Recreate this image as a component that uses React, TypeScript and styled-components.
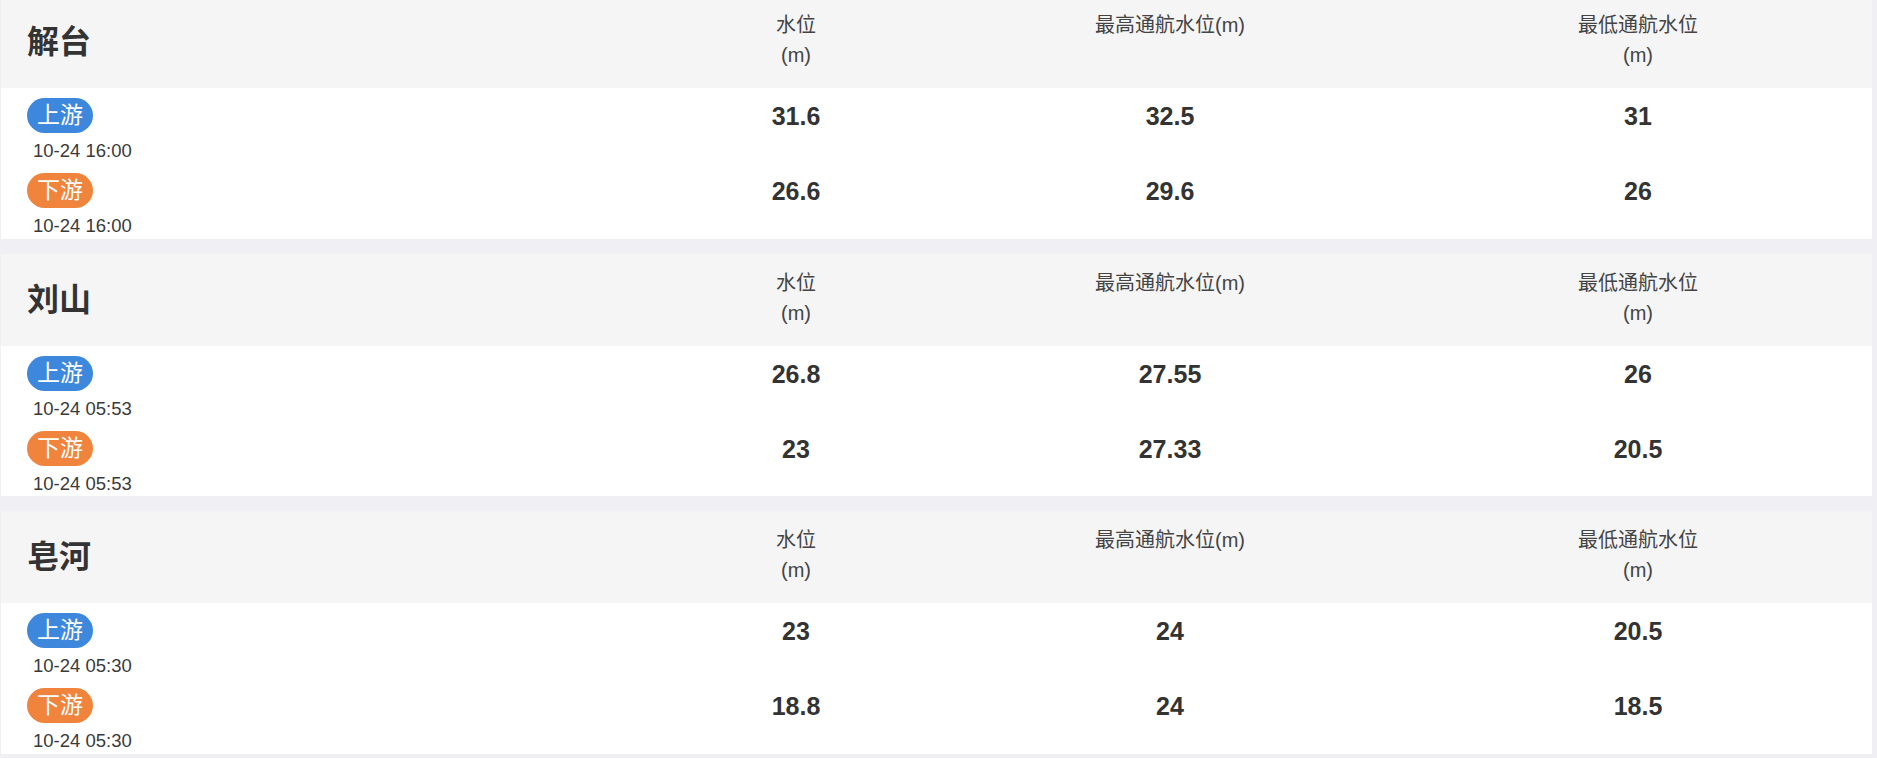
import React from "react";
import styled, { createGlobalStyle } from "styled-components";

const GlobalStyle = createGlobalStyle`
  html, body {
    margin: 0;
    padding: 0;
    background: #efeff4;
  }
  body {
    font-family: "Liberation Sans", "Noto Sans CJK SC", sans-serif;
    color: #333;
    overflow: hidden;
  }
`;

const COLS = "655px 280px 468px 1fr";

const Page = styled.div`
  display: flex;
  flex-direction: column;
  gap: 15px;
  margin-top: -4px;
  padding: 0 5px 0 1px;
`;

const Card = styled.section`
  display: flex;
  flex-direction: column;
  background: #fff;
`;

const Header = styled.div`
  display: grid;
  grid-template-columns: ${COLS};
  height: 92px;
  background: #f5f5f6;
`;

const Title = styled.h2`
  margin: 0;
  align-self: center;
  padding: 0 0 6px 26px;
  font-size: 32px;
  font-weight: 700;
  color: #333;
  font-family: "Liberation Sans", "Noto Sans CJK SC", sans-serif;
`;

const HeadLabel = styled.div`
  padding-top: 14px;
  text-align: center;
  font-size: 20px;
  line-height: 30px;
  color: #444;
`;

const Body = styled.div`
  display: flex;
  flex-direction: column;
  padding-bottom: 0.5px;
`;

const Row = styled.div`
  display: grid;
  grid-template-columns: ${COLS};
  height: 75px;
`;

const StationCell = styled.div`
  display: flex;
  flex-direction: column;
  align-items: flex-start;
  padding: 10px 0 0 26px;
`;

const Badge = styled.span<{ $tone: "up" | "down" }>`
  display: inline-flex;
  align-items: center;
  justify-content: center;
  height: 35px;
  padding: 0 10px;
  border-radius: 18px;
  background: ${(p) => (p.$tone === "up" ? "#3d88dc" : "#f0843c")};
  color: #fff;
  font-size: 23px;
  font-weight: 400;
  line-height: 1;
`;

const Time = styled.div`
  margin-top: 6px;
  padding-left: 6px;
  font-size: 18.5px;
  line-height: 24px;
  color: #3a3a3a;
`;

const Num = styled.div`
  padding-top: 13px;
  text-align: center;
  font-size: 25px;
  line-height: 30px;
  font-weight: 700;
  color: #333;
`;

type Level = { label: string; tone: "up" | "down"; time: string; values: string[] };
type Station = { name: string; levels: Level[] };

const headers: string[][] = [["水位", "(m)"], ["最高通航水位(m)"], ["最低通航水位", "(m)"]];

const stations: Station[] = [
  {
    name: "解台",
    levels: [
      { label: "上游", tone: "up", time: "10-24 16:00", values: ["31.6", "32.5", "31"] },
      { label: "下游", tone: "down", time: "10-24 16:00", values: ["26.6", "29.6", "26"] },
    ],
  },
  {
    name: "刘山",
    levels: [
      { label: "上游", tone: "up", time: "10-24 05:53", values: ["26.8", "27.55", "26"] },
      { label: "下游", tone: "down", time: "10-24 05:53", values: ["23", "27.33", "20.5"] },
    ],
  },
  {
    name: "皂河",
    levels: [
      { label: "上游", tone: "up", time: "10-24 05:30", values: ["23", "24", "20.5"] },
      { label: "下游", tone: "down", time: "10-24 05:30", values: ["18.8", "24", "18.5"] },
    ],
  },
];

export default function App() {
  return (
    <>
      <GlobalStyle />
      <Page>
        {stations.map((s) => (
          <Card key={s.name}>
            <Header>
              <Title>{s.name}</Title>
              {headers.map((lines, i) => (
                <HeadLabel key={i}>
                  {lines.map((l, j) => (
                    <div key={j}>{l}</div>
                  ))}
                </HeadLabel>
              ))}
            </Header>
            <Body>
              {s.levels.map((lv) => (
                <Row key={lv.label}>
                  <StationCell>
                    <Badge $tone={lv.tone}>{lv.label}</Badge>
                    <Time>{lv.time}</Time>
                  </StationCell>
                  {lv.values.map((v, i) => (
                    <Num key={i}>{v}</Num>
                  ))}
                </Row>
              ))}
            </Body>
          </Card>
        ))}
      </Page>
    </>
  );
}
